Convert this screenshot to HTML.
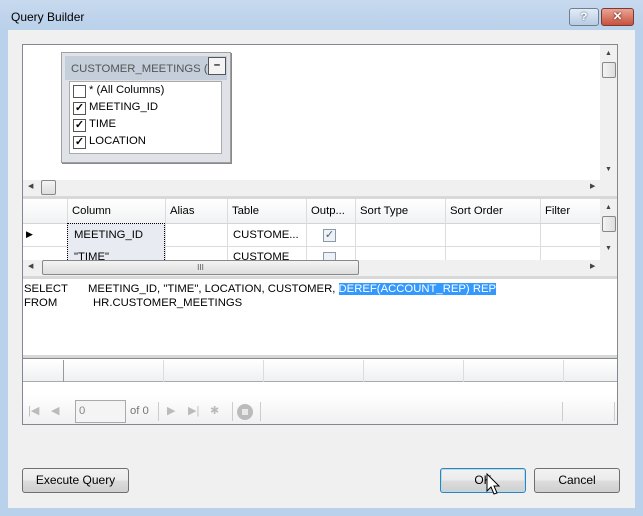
<!DOCTYPE html>
<html><head><style>
*{margin:0;padding:0;box-sizing:border-box}
body{width:643px;height:516px;position:relative;overflow:hidden;font-family:"Liberation Sans",sans-serif;font-size:11.3px;color:#000;background:#b9d1ea}
div{position:absolute}
.t{white-space:nowrap}
.cb{width:13px;height:13px;border:1px solid #555;background:#fff;font-size:11px;line-height:11px;text-align:center;font-weight:bold}
.btn{border:1px solid #707070;border-radius:3px;background:linear-gradient(#f2f2f2,#ebebeb 50%,#dddddd 50%,#cfcfcf);text-align:center;line-height:22px;font-size:12px}
.vl{width:1px;background:#dcdcdc}
.hd{top:0;height:25px;line-height:25px}
</style></head><body>
<div style="left:0;top:0;width:643px;height:30px;background:linear-gradient(#c7d9ee,#b9d1ea)"></div>
<div class="t" style="left:11px;top:10px;font-size:12px">Query Builder</div>
<div style="left:569px;top:8px;width:30px;height:18px;border:1px solid #6d7f94;border-radius:3px;background:linear-gradient(#e3ecf6,#b7cbe2);text-align:center;color:#fff;font-weight:bold;line-height:16px;text-shadow:0 0 2px #345">?</div>
<div style="left:601px;top:8px;width:33px;height:18px;border:1px solid #7a3a30;border-radius:3px;background:linear-gradient(#e9a596,#c8513d);text-align:center;color:#fff;font-weight:bold;line-height:16px;text-shadow:0 0 2px #400">✕</div>
<div style="left:8px;top:30px;width:627px;height:478px;background:#f0f0f0"></div>
<div style="left:22px;top:44px;width:596px;height:381px;border:1px solid #828790;background:#fff"></div>
<div style="left:61px;top:52px;width:170px;height:111px;background:#dfe3e8;border:1px solid #a0a0a0;box-shadow:1px 1px 0 #888"></div>
<div style="left:65px;top:56px;width:162px;height:24px;background:#c4cfdb;overflow:hidden"><div class="t" style="left:6px;top:7px;color:#555">CUSTOMER_MEETINGS (H</div></div>
<div style="left:208px;top:57px;width:18px;height:18px;border:1px solid #555;background:#f4f4f4;font-weight:bold;text-align:center;line-height:14px">–</div>
<div style="left:69px;top:81px;width:153px;height:73px;background:#fff;border:1px solid #aaa"></div>
<div class="cb" style="left:73px;top:85px"></div><div class="t" style="left:89px;top:84px">* (All Columns)</div>
<div class="cb" style="left:73px;top:102px">✓</div><div class="t" style="left:89px;top:101px">MEETING_ID</div>
<div class="cb" style="left:73px;top:119px">✓</div><div class="t" style="left:89px;top:118px">TIME</div>
<div class="cb" style="left:73px;top:136px">✓</div><div class="t" style="left:89px;top:135px">LOCATION</div>
<div style="left:600px;top:45px;width:17px;height:135px;background:#f0f0f0"></div>
<div style="left:602px;top:62px;width:14px;height:16px;border:1px solid #888;border-radius:2px;background:linear-gradient(90deg,#f4f4f4,#ddd)"></div>
<div class="t" style="left:605px;top:50px;font-size:7px;color:#444">▲</div>
<div class="t" style="left:605px;top:166px;font-size:7px;color:#444">▼</div>
<div style="left:23px;top:180px;width:594px;height:16px;background:#f0f0f0"></div>
<div style="left:41px;top:180px;width:15px;height:15px;border:1px solid #888;border-radius:2px;background:linear-gradient(#f4f4f4,#ddd)"></div>
<div class="t" style="left:28px;top:182px;font-size:7px;color:#444">◀</div>
<div class="t" style="left:590px;top:182px;font-size:7px;color:#444">▶</div>
<div style="left:23px;top:196px;width:594px;height:3px;background:#d8d8d8"></div>
<div style="left:23px;top:199px;width:594px;height:61px;background:#fff">
 <div style="left:0;top:0;width:577px;height:25px;background:linear-gradient(#fff,#f1f2f4);border-bottom:1px solid #d5d5d5"></div>
 <div class="t hd" style="left:49px">Column</div>
 <div class="t hd" style="left:147px">Alias</div>
 <div class="t hd" style="left:209px">Table</div>
 <div class="t hd" style="left:288px">Outp...</div>
 <div class="t hd" style="left:337px">Sort Type</div>
 <div class="t hd" style="left:427px">Sort Order</div>
 <div class="t hd" style="left:522px">Filter</div>
 <div class="vl" style="left:44px;top:0;height:61px"></div>
 <div class="vl" style="left:142px;top:0;height:61px"></div>
 <div class="vl" style="left:204px;top:0;height:61px"></div>
 <div class="vl" style="left:283px;top:0;height:61px"></div>
 <div class="vl" style="left:332px;top:0;height:61px"></div>
 <div class="vl" style="left:422px;top:0;height:61px"></div>
 <div class="vl" style="left:517px;top:0;height:61px"></div>
 <div style="left:0;top:47px;width:577px;height:1px;background:#dcdcdc"></div>
 <div style="left:44px;top:24px;width:98px;height:37px;background:#e8ecf2;border:1px dotted #000;border-bottom:none"></div>
 <div class="t" style="left:3px;top:30px;font-size:9px">▶</div>
 <div class="t" style="left:51px;top:30px">MEETING_ID</div>
 <div class="t" style="left:210px;top:30px">CUSTOME...</div>
 <div style="left:300px;top:30px;width:13px;height:13px;border:1px solid #8a99ab;background:#eef1f6;color:#4a6080;font-size:11px;line-height:11px;text-align:center">✓</div>
 <div class="t" style="left:51px;top:52px">"TIME"</div>
 <div class="t" style="left:210px;top:52px">CUSTOME</div>
 <div style="left:300px;top:53px;width:13px;height:8px;border:1px solid #8a99ab;border-bottom:none;background:#eef1f6"></div>
 <div style="left:577px;top:0;width:17px;height:61px;background:#f0f0f0"></div>
 <div style="left:579px;top:17px;width:14px;height:16px;border:1px solid #888;border-radius:2px;background:linear-gradient(90deg,#f4f4f4,#ddd)"></div>
 <div class="t" style="left:582px;top:5px;font-size:7px;color:#444">▲</div>
 <div class="t" style="left:582px;top:46px;font-size:7px;color:#444">▼</div>
</div>
<div style="left:23px;top:260px;width:594px;height:16px;background:#f0f0f0"></div>
<div style="left:42px;top:260px;width:317px;height:15px;border:1px solid #888;border-radius:2px;background:linear-gradient(#f4f4f4,#ddd);text-align:center;font-size:8px;line-height:13px;color:#555">III</div>
<div class="t" style="left:28px;top:262px;font-size:7px;color:#444">◀</div>
<div class="t" style="left:590px;top:262px;font-size:7px;color:#444">▶</div>
<div style="left:23px;top:276px;width:594px;height:3px;background:#d8d8d8"></div>
<div class="t" style="left:24px;top:283px">SELECT</div>
<div class="t" style="left:88px;top:283px">MEETING_ID, "TIME", LOCATION, CUSTOMER, <span style="background:#3399ff;color:#fff">DEREF(ACCOUNT_REP) REP</span></div>
<div class="t" style="left:24px;top:297px">FROM</div>
<div class="t" style="left:93px;top:297px">HR.CUSTOMER_MEETINGS</div>
<div style="left:23px;top:355px;width:594px;height:4px;background:#d8d8d8;border-bottom:1px solid #888"></div>
<div style="left:23px;top:360px;width:594px;height:22px;background:linear-gradient(#fff,#eef0f2);border-bottom:1px solid #aaa"></div>
<div style="left:63px;top:360px;width:1px;height:22px;background:#999"></div>
<div class="vl" style="left:163px;top:360px;height:22px"></div>
<div class="vl" style="left:263px;top:360px;height:22px"></div>
<div class="vl" style="left:363px;top:360px;height:22px"></div>
<div class="vl" style="left:463px;top:360px;height:22px"></div>
<div class="vl" style="left:563px;top:360px;height:22px"></div>
<div style="left:23px;top:395px;width:594px;height:29px;background:linear-gradient(#fff,#f0f0f0)"></div>
<div class="t" style="left:28px;top:404px;color:#bbb;font-size:11px">|◀</div>
<div class="t" style="left:51px;top:404px;color:#bbb;font-size:11px">◀</div>
<div style="left:75px;top:400px;width:51px;height:23px;border:1px solid #aaa;background:#f4f4f4;color:#888;padding-left:3px;line-height:21px">0</div>
<div class="t" style="left:130px;top:405px;color:#777">of 0</div>
<div class="vl" style="left:158px;top:402px;height:19px;background:#ccc"></div>
<div class="t" style="left:167px;top:404px;color:#bbb;font-size:11px">▶</div>
<div class="t" style="left:188px;top:404px;color:#bbb;font-size:11px">▶|</div>
<div class="t" style="left:210px;top:404px;color:#bbb;font-size:11px">✱</div>
<div class="vl" style="left:232px;top:402px;height:19px;background:#ccc"></div>
<div style="left:237px;top:404px;width:16px;height:16px;border-radius:50%;background:#bbb"></div>
<div style="left:242px;top:409px;width:6px;height:6px;background:#e8e8e8"></div>
<div class="vl" style="left:260px;top:402px;height:19px;background:#ccc"></div>
<div class="vl" style="left:562px;top:402px;height:19px;background:#ccc"></div>
<div class="vl" style="left:614px;top:402px;height:19px;background:#ccc"></div>
<div class="btn" style="left:22px;top:468px;width:107px;height:25px">Execute Query</div>
<div class="btn" style="left:440px;top:468px;width:86px;height:25px;border-color:#3c7fb1;box-shadow:inset 0 0 0 1px #a8e0f8">OK</div>
<div class="btn" style="left:534px;top:468px;width:86px;height:25px">Cancel</div>
<svg style="position:absolute;left:486px;top:473px" width="16" height="24"><path d="M1 1 L1 18 L5 14 L8 21 L11 20 L8 13 L13 13 Z" fill="#fff" stroke="#000" stroke-width="1"/></svg>
</body></html>
